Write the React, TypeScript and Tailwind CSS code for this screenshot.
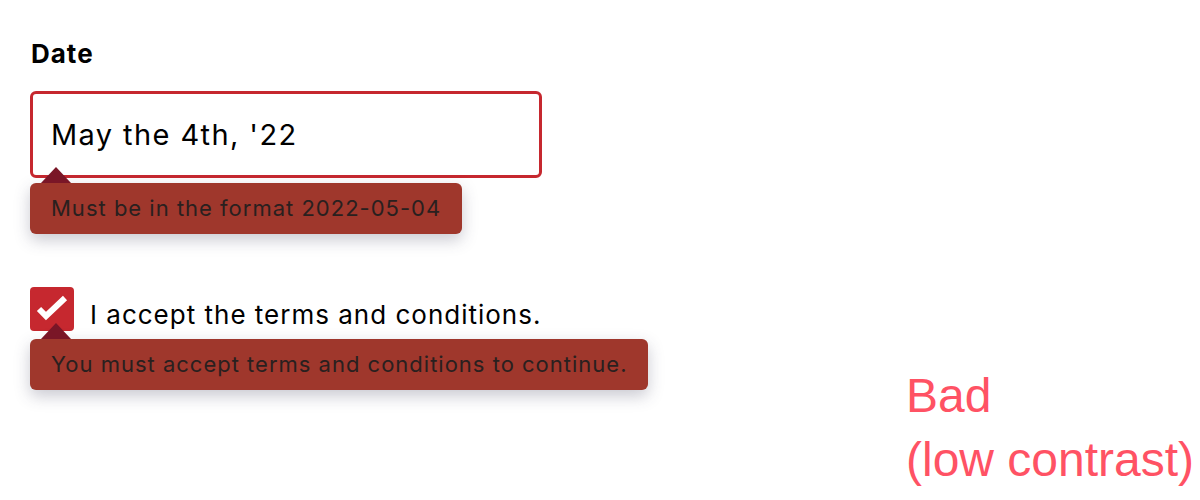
import React from "react";

function Tip({ children }: { children: React.ReactNode }) {
  return (
    <div className="relative">
      <div className="absolute left-[11px] top-[-16px] w-0 h-0 border-l-[15px] border-r-[15px] border-b-[16px] border-l-transparent border-r-transparent border-b-[#7a1627]" />
      <div className="inline-flex items-center h-[51px] px-[21px] rounded-[6px] bg-[#9f372c] text-[#29201f] text-[22px] tracking-[1px] shadow-[0_6px_16px_rgba(60,60,90,0.28)]">
        {children}
      </div>
    </div>
  );
}

export default function App() {
  return (
    <div className="w-[1200px] h-[500px] bg-white flex" style={{ fontFamily: "Inter, 'Noto Sans', sans-serif" }}>
      <div className="pl-[30px] pt-[39px] flex flex-col w-[870px]">
        <label className="text-[26px] font-bold text-black leading-[30px] tracking-[1px] pl-[1px]">Date</label>
        <div className="mt-[22px] w-[512px] h-[87px] border-[3px] border-[#c6282f] rounded-[6px] flex items-center pl-[18px]">
          <span className="text-[29px] tracking-[1.4px] text-black">May the 4th, '22</span>
        </div>
        <div className="mt-[5px]">
          <Tip>Must be in the format 2022-05-04</Tip>
        </div>
        <div className="mt-[53px] flex items-center gap-[16px] h-[44px]">
          <div className="w-[44px] h-[44px] rounded-[4px] bg-[#c6282f] shrink-0">
            <svg width="44" height="44" viewBox="0 0 44 44">
              <path d="M9 22 L16 29 L35 11" fill="none" stroke="white" strokeWidth="6" strokeLinecap="butt" strokeLinejoin="miter" />
            </svg>
          </div>
          <span className="text-[26px] leading-[32px] tracking-[1px] text-black mt-[12px]">I accept the terms and conditions.</span>
        </div>
        <div className="mt-[8px]">
          <Tip>You must accept terms and conditions to continue.</Tip>
        </div>
      </div>
      <div className="self-end pb-[8px] ml-[36px] text-[48px] leading-[64px] text-[#ff5264]" style={{ fontFamily: "'Liberation Sans', Arial, sans-serif" }}>
        <div>Bad</div>
        <div>(low contrast)</div>
      </div>
    </div>
  );
}
